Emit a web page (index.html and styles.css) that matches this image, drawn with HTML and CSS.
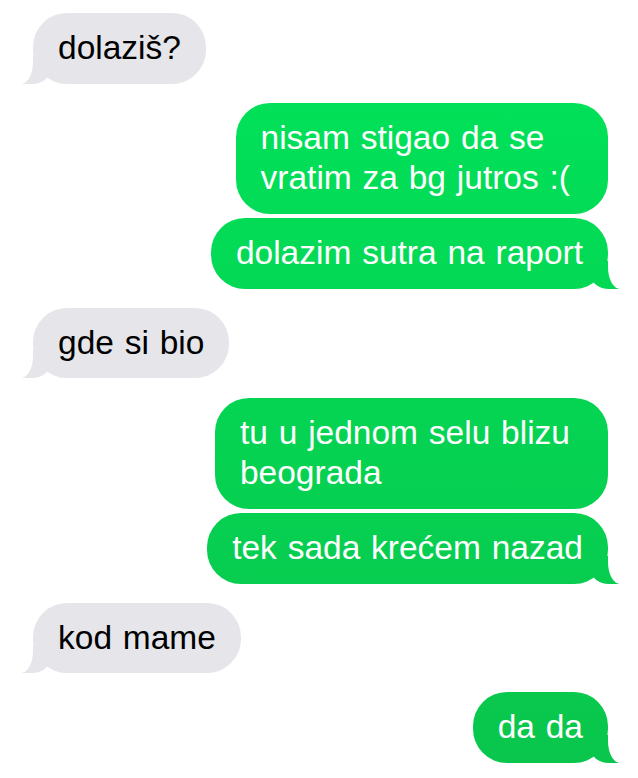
FILE: index.html
```html
<!DOCTYPE html>
<html lang="sr">
<head>
<meta charset="utf-8">
<title>Poruke</title>
<link rel="stylesheet" href="styles.css">
</head>
<body>
<main class="thread">
  <div class="group them">
    <div class="bubble tail">dolaziš?</div>
  </div>
  <div class="group me">
    <div class="bubble multi">nisam stigao da se<br>vratim za bg jutros :(</div>
    <div class="bubble tail">dolazim sutra na raport</div>
  </div>
  <div class="group them">
    <div class="bubble tail">gde si bio</div>
  </div>
  <div class="group me">
    <div class="bubble multi">tu u jednom selu blizu<br>beograda</div>
    <div class="bubble tail">tek sada krećem nazad</div>
  </div>
  <div class="group them">
    <div class="bubble tail">kod mame</div>
  </div>
  <div class="group me">
    <div class="bubble tail">da da</div>
  </div>
</main>
</body>
</html>
```
FILE: styles.css
```css
html, body {
  margin: 0;
  padding: 0;
  background: #ffffff;
}

.thread {
  display: flex;
  flex-direction: column;
  gap: 19.2px;
  padding: 13px 30px 0 33px;
  font-family: "Liberation Sans", Arial, sans-serif;
  font-size: 33.5px;
  line-height: 40.5px;
  word-spacing: 1.5px;
}

.group {
  display: flex;
  flex-direction: column;
  gap: 4.5px;
}

.group.them { align-items: flex-start; }
.group.me { align-items: flex-end; }

.bubble {
  position: relative;
  box-sizing: border-box;
  padding: 15px 25px;
  border-radius: 34px;
  white-space: nowrap;
}

.bubble.multi {
  padding-right: 38px;
}

.them .bubble {
  background: #e5e5ea;
  color: #000000;
}

.me .bubble {
  background: linear-gradient(180deg, #00e45a 0%, #0ac54c 100%) fixed;
  color: #ffffff;
}

/* tails */
.bubble.tail::before,
.bubble.tail::after {
  content: "";
  position: absolute;
  bottom: 0;
}

.them .bubble.tail::before {
  left: -11px;
  width: 28px;
  height: 28px;
  background: #e5e5ea;
  border-bottom-right-radius: 18px 14px;
}

.them .bubble.tail::after {
  left: -40px;
  width: 40px;
  height: 30px;
  background: #ffffff;
  border-bottom-right-radius: 12px 22px;
}

.me .bubble.tail::before {
  right: -11px;
  width: 28px;
  height: 28px;
  background: linear-gradient(180deg, #00e45a 0%, #0ac54c 100%) fixed;
  border-bottom-left-radius: 18px 14px;
}

.me .bubble.tail::after {
  right: -40px;
  width: 40px;
  height: 30px;
  background: #ffffff;
  border-bottom-left-radius: 12px 22px;
}
```
